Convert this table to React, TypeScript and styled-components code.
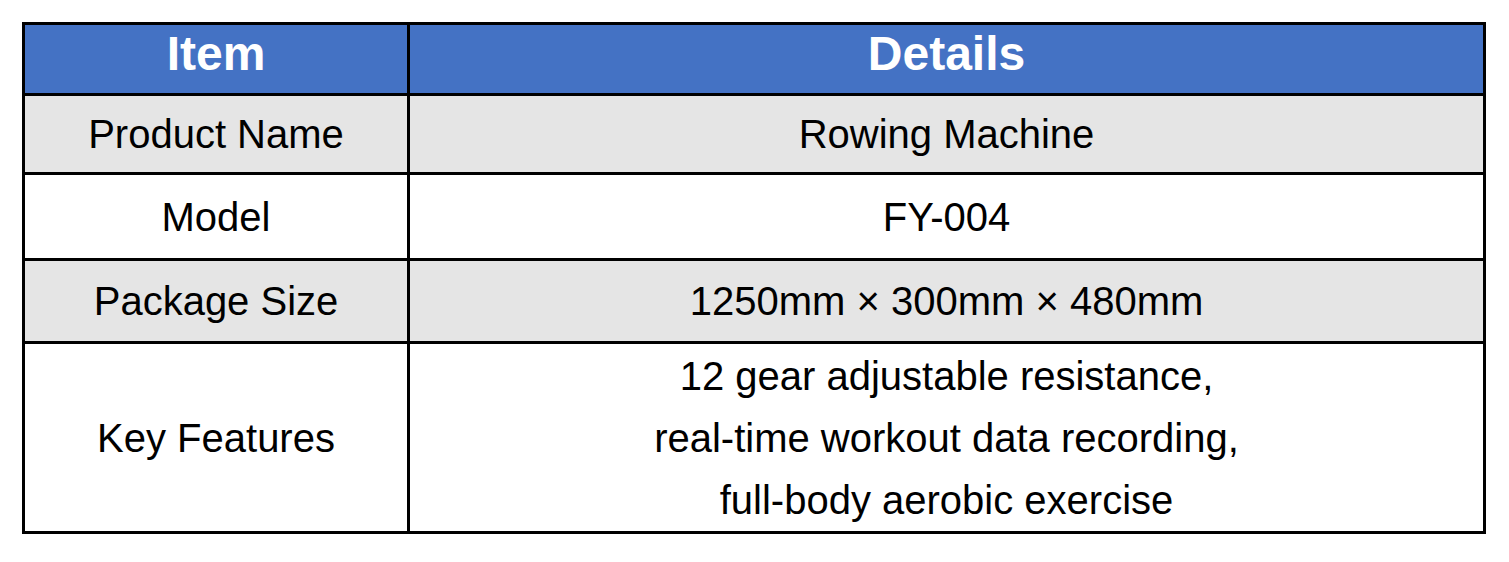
import React from "react";
import styled, { createGlobalStyle } from "styled-components";

const GlobalStyle = createGlobalStyle`
  html, body {
    margin: 0;
    padding: 0;
    background: #ffffff;
  }
  body {
    font-family: "Liberation Sans", Arial, sans-serif;
    color: #000000;
  }
`;

const Page = styled.div`
  padding: 22px;
`;

const Table = styled.div`
  display: grid;
  grid-template-columns: 382px 1073px;
  grid-template-rows: 68px 76px 83px 80px 187px;
  gap: 3px;
  padding: 3px;
  width: 1464px;
  box-sizing: border-box;
  background: #000000;
`;

type Tone = "head" | "shade" | "plain";

const Cell = styled.div<{ $tone: Tone }>`
  display: flex;
  align-items: center;
  justify-content: center;
  box-sizing: border-box;
  text-align: center;
  padding-bottom: ${({ $tone }) => ($tone === "head" ? "10px" : "0")};
  background: ${({ $tone }) =>
    $tone === "head" ? "#4472c4" : $tone === "shade" ? "#e5e5e5" : "#ffffff"};
  color: ${({ $tone }) => ($tone === "head" ? "#ffffff" : "#000000")};
  font-family: "Liberation Sans", Arial, sans-serif;
  font-size: ${({ $tone }) => ($tone === "head" ? "48px" : "40px")};
  font-weight: ${({ $tone }) => ($tone === "head" ? 700 : 400)};
  line-height: 62px;
`;

const Lines = styled.div`
  display: flex;
  flex-direction: column;
  align-items: center;
`;

const rows: { item: string; details: string[]; tone: Tone }[] = [
  { item: "Product Name", details: ["Rowing Machine"], tone: "shade" },
  { item: "Model", details: ["FY-004"], tone: "plain" },
  { item: "Package Size", details: ["1250mm × 300mm × 480mm"], tone: "shade" },
  {
    item: "Key Features",
    details: [
      "12 gear adjustable resistance,",
      "real-time workout data recording,",
      "full-body aerobic exercise",
    ],
    tone: "plain",
  },
];

export default function App() {
  return (
    <>
      <GlobalStyle />
      <Page>
        <Table>
          <Cell $tone="head">Item</Cell>
          <Cell $tone="head">Details</Cell>
          {rows.map((r) => (
            <React.Fragment key={r.item}>
              <Cell $tone={r.tone}>{r.item}</Cell>
              <Cell $tone={r.tone}>
                <Lines>
                  {r.details.map((d) => (
                    <span key={d}>{d}</span>
                  ))}
                </Lines>
              </Cell>
            </React.Fragment>
          ))}
        </Table>
      </Page>
    </>
  );
}
